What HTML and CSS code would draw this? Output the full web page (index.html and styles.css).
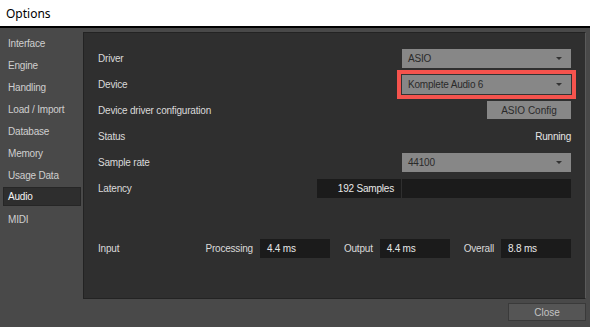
FILE: index.html
```html
<!DOCTYPE html>
<html lang="en">
<head>
    <meta charset="UTF-8">
    <title>Options</title>
    <link rel="stylesheet" href="styles.css">
</head>
<body>
    <div class="titlebar">Options</div>

    <div class="window">
        <nav class="sidebar">
            <div class="nav-item">Interface</div>
            <div class="nav-item">Engine</div>
            <div class="nav-item">Handling</div>
            <div class="nav-item">Load / Import</div>
            <div class="nav-item">Database</div>
            <div class="nav-item">Memory</div>
            <div class="nav-item">Usage Data</div>
            <div class="nav-item active"><span>Audio</span></div>
            <div class="nav-item">MIDI</div>
        </nav>

        <section class="panel">
            <div class="row">
                <span class="label">Driver</span>
                <div class="dropdown"><span>ASIO</span><i class="arrow"></i></div>
            </div>
            <div class="row">
                <span class="label">Device</span>
                <div class="dropdown highlight"><span>Komplete Audio 6</span><i class="arrow"></i></div>
            </div>
            <div class="row">
                <span class="label">Device driver configuration</span>
                <button class="button">ASIO Config</button>
            </div>
            <div class="row">
                <span class="label">Status</span>
                <span class="status">Running</span>
            </div>
            <div class="row">
                <span class="label">Sample rate</span>
                <div class="dropdown"><span>44100</span><i class="arrow"></i></div>
            </div>
            <div class="row">
                <span class="label">Latency</span>
                <div class="latency">
                    <div class="box samples">192 Samples</div>
                    <div class="box slider"></div>
                </div>
            </div>

            <div class="row timing">
                <span class="label">Input</span>
                <div class="stats">
                    <div class="stat">
                        <span class="label">Processing</span>
                        <div class="box value">4.4 ms</div>
                    </div>
                    <div class="stat">
                        <span class="label">Output</span>
                        <div class="box value">4.4 ms</div>
                    </div>
                    <div class="stat">
                        <span class="label">Overall</span>
                        <div class="box value">8.8 ms</div>
                    </div>
                </div>
            </div>
        </section>

        <div class="footer">
            <button class="close-button">Close</button>
        </div>
    </div>
</body>
</html>
```

FILE: styles.css
```css
* {
    box-sizing: border-box;
}
body {
    margin: 0;
    width: 590px;
    height: 327px;
    overflow: hidden;
    background: #494949;
    font-family: 'Liberation Sans', Arial, sans-serif;
    font-size: 10px;
    letter-spacing: -0.2px;
}
.titlebar {
    height: 28px;
    padding: 5px 6px 0;
    background: white;
    border-bottom: 2px solid #000;
    color: #000;
    font-family: 'Noto Sans', 'Liberation Sans', sans-serif;
    font-size: 12px;
    letter-spacing: 0;
}
.window {
    display: grid;
    grid-template-columns: 83px 503px;
    grid-template-rows: 267px 1fr;
    height: 299px;
    padding-top: 4px;
}
.sidebar {
    grid-row: 1 / 3;
    color: #cfcfcf;
}
.nav-item {
    height: 22px;
    display: flex;
    align-items: center;
    padding-left: 8px;
}
.nav-item.active {
    padding: 1px 2px 2px 3px;
}
.nav-item.active span {
    flex: 1;
    height: 19px;
    display: flex;
    align-items: center;
    padding-left: 4px;
    background: #2e2e2e;
    border: 1px solid #262626;
    color: #f4f4f4;
}
.panel {
    background: #2f2f2f;
    border: 1px solid #232323;
    border-right-color: #5a5a5a;
    padding: 12px 14px 0 14px;
    color: #dadada;
}
.row {
    height: 26px;
    display: flex;
    align-items: center;
    justify-content: space-between;
}
.label {
    white-space: nowrap;
}
.dropdown {
    width: 169px;
    height: 19px;
    display: flex;
    align-items: center;
    justify-content: space-between;
    padding: 0 9px 0 6px;
    background: #878787;
    color: #2a2a2a;
}
.dropdown.highlight {
    outline: 4px solid #f5534d;
    outline-offset: 1px;
    box-shadow: 0 0 0 1px #333;
}
.arrow {
    width: 0;
    height: 0;
    border-left: 3px solid transparent;
    border-right: 3px solid transparent;
    border-top: 3px solid #333;
}
.button {
    width: 84px;
    height: 18px;
    padding: 0;
    border: none;
    background: #878787;
    color: #2a2a2a;
    font: inherit;
}
.status {
    color: #e6e6e6;
}
.latency {
    display: flex;
    gap: 1px;
}
.box {
    height: 19px;
    display: flex;
    align-items: center;
    background: #1b1b1b;
    color: #e8e8e8;
}
.samples {
    width: 84px;
    justify-content: flex-end;
    padding-right: 7px;
}
.slider {
    width: 169px;
}
.timing {
    margin-top: 34px;
}
.stats {
    display: flex;
    gap: 14px;
}
.stat {
    display: flex;
    align-items: center;
    gap: 7px;
}
.value {
    width: 70px;
    padding-left: 7px;
}
.footer {
    display: flex;
    justify-content: flex-end;
    align-items: flex-start;
    padding-top: 4px;
}
.close-button {
    width: 78px;
    height: 18px;
    padding: 0;
    background: #555;
    border: 1px solid #3a3a3a;
    color: #c4c4c4;
    font: inherit;
}
```
